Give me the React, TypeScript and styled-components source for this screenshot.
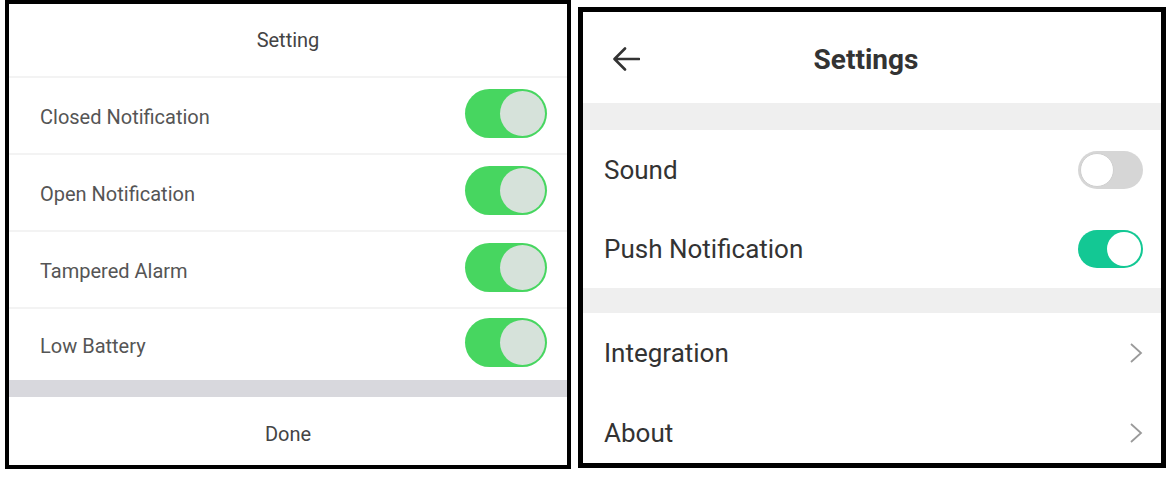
import React from "react";
import styled, { createGlobalStyle } from "styled-components";

const Global = createGlobalStyle`
  html, body { margin: 0; padding: 0; background: #fff; }
  body { font-family: Roboto, "Noto Sans", Arial, sans-serif; }
`;

const Page = styled.div`
  display: flex;
  align-items: flex-start;
  width: 1176px;
  height: 478px;
  background: #fff;
`;

const LeftPanel = styled.div`
  margin-left: 5px;
  width: 566px;
  height: 469px;
  box-sizing: border-box;
  border: 4px solid #000;
  display: flex;
  flex-direction: column;
  background: #fff;
  overflow: hidden;
`;

const LeftHeader = styled.div`
  height: 72px;
  flex: none;
  display: flex;
  align-items: center;
  justify-content: center;
  font-size: 20px;
  color: #444;
`;

const LeftRow = styled.div<{ $h: number }>`
  height: ${(p) => p.$h}px;
  flex: none;
  box-sizing: border-box;
  border-top: 2px solid #f3f3f3;
  display: flex;
  align-items: center;
  justify-content: space-between;
  padding: 0 20px 0 31px;
  font-size: 20px;
  color: #555;
`;

const LeftLabel = styled.span`
  padding-top: 3px;
`;

const LeftBand = styled.div`
  height: 17px;
  flex: none;
  background: #d8d8dd;
`;

const DoneBar = styled.div`
  flex: 1;
  display: flex;
  align-items: center;
  justify-content: center;
  padding-top: 6px;
  font-size: 20px;
  color: #444;
`;

const IosToggle = styled.div`
  width: 82px;
  height: 49px;
  box-sizing: border-box;
  border-radius: 25px;
  background: #47d660;
  display: flex;
  align-items: center;
  justify-content: flex-end;
  padding: 2px;
  margin-bottom: 5px;
`;

const IosKnob = styled.div`
  width: 45px;
  height: 45px;
  border-radius: 50%;
  background: #d6e2da;
`;

const RightPanel = styled.div`
  margin-left: 7px;
  margin-top: 7px;
  width: 588px;
  height: 461px;
  box-sizing: border-box;
  border: 5px solid #000;
  display: flex;
  flex-direction: column;
  background: #fff;
  overflow: hidden;
`;

const RightHeader = styled.div`
  height: 91px;
  flex: none;
  display: grid;
  grid-template-columns: 1fr auto 1fr;
  align-items: center;
  padding: 0 29px;
  box-sizing: border-box;
`;

const BackBtn = styled.div`
  display: flex;
  align-items: center;
  padding-top: 2px;
`;

const Title = styled.div`
  font-size: 28px;
  font-weight: 700;
  color: #333;
  padding-top: 3px;
  margin-right: 12px;
`;

const RightBand = styled.div<{ $h: number }>`
  height: ${(p) => p.$h}px;
  flex: none;
  background: #efefef;
`;

const RightRow = styled.div<{ $h: number }>`
  height: ${(p) => p.$h}px;
  flex: none;
  display: flex;
  align-items: center;
  justify-content: space-between;
  padding: 0 18px 0 21px;
  font-size: 26px;
  color: #333;
`;

const Switch = styled.div<{ $on: boolean }>`
  width: 65px;
  height: 38px;
  box-sizing: border-box;
  border-radius: 19px;
  background: ${(p) => (p.$on ? "#13c894" : "#d6d6d6")};
  display: flex;
  align-items: center;
  justify-content: ${(p) => (p.$on ? "flex-end" : "flex-start")};
  padding: 2px;
`;

const SwitchKnob = styled.div<{ $on: boolean }>`
  width: 34px;
  height: 34px;
  box-sizing: border-box;
  border-radius: 50%;
  background: #fff;
  border: ${(p) => (p.$on ? "none" : "1.5px solid #cfcfcf")};
`;

const Chevron = () => (
  <svg width="14" height="22" viewBox="0 0 14 22">
    <polyline points="2,2 12,11 2,20" fill="none" stroke="#9a9a9a" strokeWidth="1.8" strokeLinejoin="miter" />
  </svg>
);

const BackArrow = () => (
  <svg width="28" height="26" viewBox="0 0 28 26">
    <path d="M27 13 H3 M13 2.5 L2.5 13 L13 23.5" fill="none" stroke="#333" strokeWidth="2.6" strokeLinecap="round" strokeLinejoin="round" />
  </svg>
);

const leftItems = [
  { label: "Closed Notification", h: 77 },
  { label: "Open Notification", h: 77 },
  { label: "Tampered Alarm", h: 77 },
  { label: "Low Battery", h: 73 },
];

export default function App() {
  return (
    <Page>
      <Global />
      <LeftPanel>
        <LeftHeader>Setting</LeftHeader>
        {leftItems.map((it) => (
          <LeftRow key={it.label} $h={it.h}>
            <LeftLabel>{it.label}</LeftLabel>
            <IosToggle>
              <IosKnob />
            </IosToggle>
          </LeftRow>
        ))}
        <LeftBand />
        <DoneBar>Done</DoneBar>
      </LeftPanel>
      <RightPanel>
        <RightHeader>
          <BackBtn>
            <BackArrow />
          </BackBtn>
          <Title>Settings</Title>
          <div />
        </RightHeader>
        <RightBand $h={27} />
        <RightRow $h={79}>
          <span>Sound</span>
          <Switch $on={false}>
            <SwitchKnob $on={false} />
          </Switch>
        </RightRow>
        <RightRow $h={79}>
          <span>Push Notification</span>
          <Switch $on={true}>
            <SwitchKnob $on={true} />
          </Switch>
        </RightRow>
        <RightBand $h={25} />
        <RightRow $h={80}>
          <span>Integration</span>
          <Chevron />
        </RightRow>
        <RightRow $h={80}>
          <span>About</span>
          <Chevron />
        </RightRow>
      </RightPanel>
    </Page>
  );
}
